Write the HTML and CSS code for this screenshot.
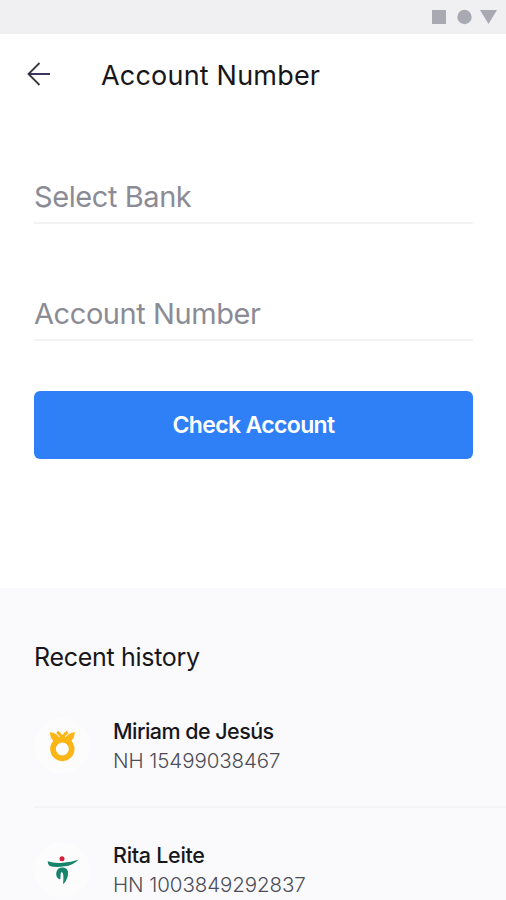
FILE: index.html
```html
<!DOCTYPE html>
<html lang="en">
<head>
<meta charset="utf-8">
<title>Account Number</title>
<link rel="stylesheet" href="styles.css">
</head>
<body>
<div class="status">
  <svg width="66" height="16" viewBox="0 0 66 16"><path d="M1 1h14v14H1z"/><circle cx="33.500" cy="8" r="7.200"/><path d="M49 1h17l-8.500 14z"/></svg>
</div>
<header class="bar">
  <svg class="back" width="24" height="24" viewBox="0 0 24 24"><path d="M12.500 1L1.500 12L12.500 23"/><path class="shaft" d="M23 12H2"/></svg>
  <h1>Account Number</h1>
</header>
<main class="form">
  <div class="field">Select Bank</div>
  <div class="field">Account Number</div>
  <button class="check">Check Account</button>
</main>
<section class="history">
  <h2>Recent history</h2>
  <div class="item">
    <div class="logo"><svg width="56" height="56" viewBox="12 24 168 168">
      <circle cx="97" cy="117" r="28" fill="none" stroke="#fbb615" stroke-width="17"/>
      <path fill="#fbb615" d="M59 67Q80 67 90 87L72 106Q70 88 63 84zM135 67Q114 67 104 87L122 106Q124 88 131 84z"/>
      <path fill="none" stroke="#fbb615" stroke-width="9" d="M81 66Q95 75 101 94M113 66Q99 75 93 94"/>
    </svg></div>
    <div class="info"><p class="name">Miriam de Jesús</p><p class="number">NH 15499038467</p></div>
  </div>
  <div class="item">
    <div class="logo"><svg width="56" height="56" viewBox="12 21 168 168">
      <circle cx="96" cy="71" r="7.500" fill="#d9203a"/>
      <path fill="#15846a" d="M53 79Q75 86 98 83Q123 81 146 74Q128 91 104 94Q76 99 59 93Q53 88 53 79z"/>
      <path fill="#15846a" d="M79 121Q77 103 91 98Q110 95 114 110Q116 131 99 148Q102 122 98 113Q93 109 92 116L91 133Q81 132 79 121z"/>
    </svg></div>
    <div class="info"><p class="name rita">Rita Leite</p><p class="number">HN 1003849292837</p></div>
  </div>
</section>
</body>
</html>
```
FILE: styles.css
```css
* { box-sizing: border-box; margin: 0; padding: 0; }
body { height: 900px; overflow: hidden; background: #fff; font-family: Inter, sans-serif; color: #17171b; }
.status { height: 34px; background: #f0f0f3; display: flex; justify-content: flex-end; align-items: center; padding-right: 9px; }
.status svg { fill: #a9a9b2; }
.bar { height: 80px; display: flex; align-items: center; padding-left: 27px; gap: 50px; }
.back { fill: none; stroke: #38383e; stroke-width: 1.8; }
.shaft { stroke: #25204d; }
h1 { font-size: 27px; line-height: 40px; font-weight: 400; letter-spacing: .2px; padding-top: 4px; }
.form { height: 474px; padding: 51px 33px 0 34px; }
.field { height: 59px; border-bottom: 2px solid #f2f2f3; margin-bottom: 58px; padding-top: 12px; font-size: 29px; line-height: 40px; letter-spacing: -.42px; color: #8b8b95; }
.check { display: block; width: 439px; height: 68px; margin-top: -8px; border: 0; border-radius: 6px; background: #2f80f6; color: #fff; font: 600 23px Inter, sans-serif; letter-spacing: -.65px; }
.history { height: 312px; background: #fafafc; padding: 52px 0 0 34px; }
h2 { font-size: 25px; line-height: 34px; font-weight: 400; letter-spacing: -.3px; }
.item { display: flex; height: 134px; padding-top: 42px; border-bottom: 2px solid #f4f4f6; }
.item + .item { padding-top: 32px; }
.logo { width: 56px; height: 56px; margin-top: 2px; border-radius: 50%; background: #fcfcfd; margin-right: 23px; }
.logo svg { display: block; }
.name { font-size: 21.5px; line-height: 30px; font-weight: 500; letter-spacing: -.55px; }
.rita { letter-spacing: -.3px; }
.number { font-size: 20.5px; line-height: 30px; font-weight: 300; letter-spacing: -.08px; color: #4d4d57; }
```
